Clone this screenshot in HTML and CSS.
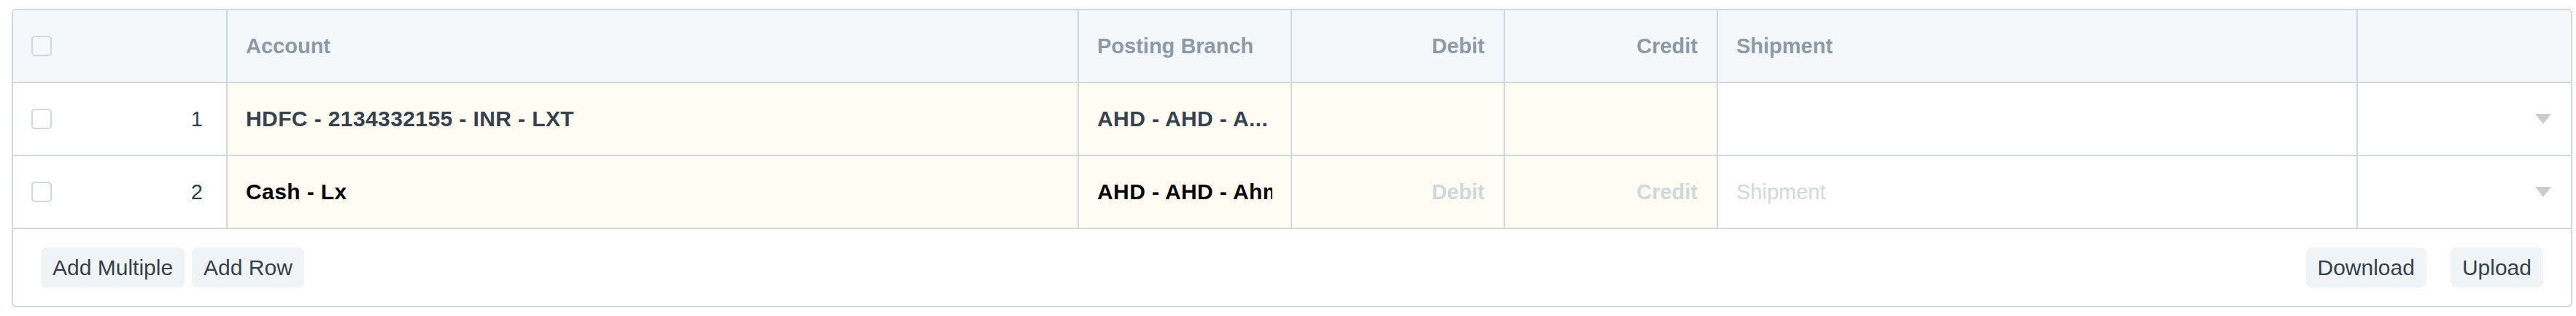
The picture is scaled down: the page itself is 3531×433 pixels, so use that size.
FILE: index.html
```html
<!DOCTYPE html>
<html>
<head>
<meta charset="utf-8">
<link rel="stylesheet" href="styles.css">
</head>
<body>
<div class="grid">
  <div class="row head">
    <div class="cell c-idx"><span class="check"></span></div>
    <div class="cell">Account</div>
    <div class="cell">Posting Branch</div>
    <div class="cell right">Debit</div>
    <div class="cell right">Credit</div>
    <div class="cell">Shipment</div>
    <div class="cell last"></div>
  </div>
  <div class="row">
    <div class="cell c-idx white"><span class="check"></span><span class="num">1</span></div>
    <div class="cell ed strong">HDFC - 2134332155 - INR - LXT</div>
    <div class="cell ed strong">AHD - AHD - A...</div>
    <div class="cell ed right"></div>
    <div class="cell ed right"></div>
    <div class="cell white"></div>
    <div class="cell white last"><span class="caret"></span></div>
  </div>
  <div class="row">
    <div class="cell c-idx white"><span class="check"></span><span class="num">2</span></div>
    <div class="cell ed strong black">Cash - Lx</div>
    <div class="cell ed strong black"><span class="clip">AHD - AHD - Ahmedabad</span></div>
    <div class="cell ed right ph hstrong">Debit</div>
    <div class="cell ed right ph hstrong">Credit</div>
    <div class="cell white ph">Shipment</div>
    <div class="cell white last"><span class="caret"></span></div>
  </div>
  <div class="footer">
    <div class="btns">
      <button class="btn">Add Multiple</button>
      <button class="btn">Add Row</button>
    </div>
    <div class="btns gap-lg">
      <button class="btn">Download</button>
      <button class="btn">Upload</button>
    </div>
  </div>
</div>
</body>
</html>
```

FILE: styles.css
```css
html, body {
  background: #ffffff;
}
body {
  margin: 12px 5px 0 16px;
  font-family: "Liberation Sans", Arial, sans-serif;
  font-size: 29px;
  color: #36414c;
}
.grid {
  border: 2px solid #d1d8dd;
  border-radius: 6px;
  overflow: hidden;
}
.row {
  display: grid;
  grid-template-columns: 294px 1167px 292px 292px 292px 877px 1fr;
  height: 100px;
  border-bottom: 2px solid #d1d8dd;
  box-sizing: border-box;
}
.head {
  background: #f5f8fb;
  color: #8d99a6;
  font-weight: bold;
}
.cell {
  border-right: 2px solid #d1d8dd;
  display: flex;
  align-items: center;
  padding: 0 25px;
  white-space: nowrap;
  overflow: hidden;
  min-width: 0;
}
.cell.last {
  border-right: none;
  justify-content: flex-end;
  padding-right: 27px;
}
.cell.right {
  justify-content: flex-end;
  padding-right: 26px;
}
.c-idx {
  padding: 0 32px 0 25px;
  justify-content: space-between;
}
.white { background: #ffffff; }
.ed { background: #fffcf4; }
.strong {
  font-weight: bold;
  font-size: 30px;
  letter-spacing: 0.4px;
}
.hstrong { font-weight: bold; }
.black { color: #000000; }
.clip {
  display: block;
  overflow: hidden;
  min-width: 0;
  width: 100%;
}
.ph { color: #d1d8dd; }
.num {
  color: #36414c;
}
.check {
  display: block;
  width: 24px;
  height: 24px;
  border: 2px solid #d1d8dd;
  border-radius: 5px;
  background: transparent;
}
.head .check {
  background: #f5f9fc;
}
.caret {
  display: block;
  width: 0;
  height: 0;
  border-left: 11px solid transparent;
  border-right: 11px solid transparent;
  border-top: 14px solid #cccccc;
}
.footer {
  display: flex;
  justify-content: space-between;
  align-items: center;
  padding: 25px 38px 25px 38px;
  height: 105px;
  box-sizing: border-box;
}
.btns {
  display: flex;
  gap: 10px;
}
.btns.gap-lg {
  gap: 33px;
}
.btn {
  font-family: "Liberation Sans", Arial, sans-serif;
  font-size: 30px;
  color: #36414c;
  background: #f0f4f7;
  border: none;
  border-radius: 8px;
  height: 55px;
  padding: 0 16px;
}
```
